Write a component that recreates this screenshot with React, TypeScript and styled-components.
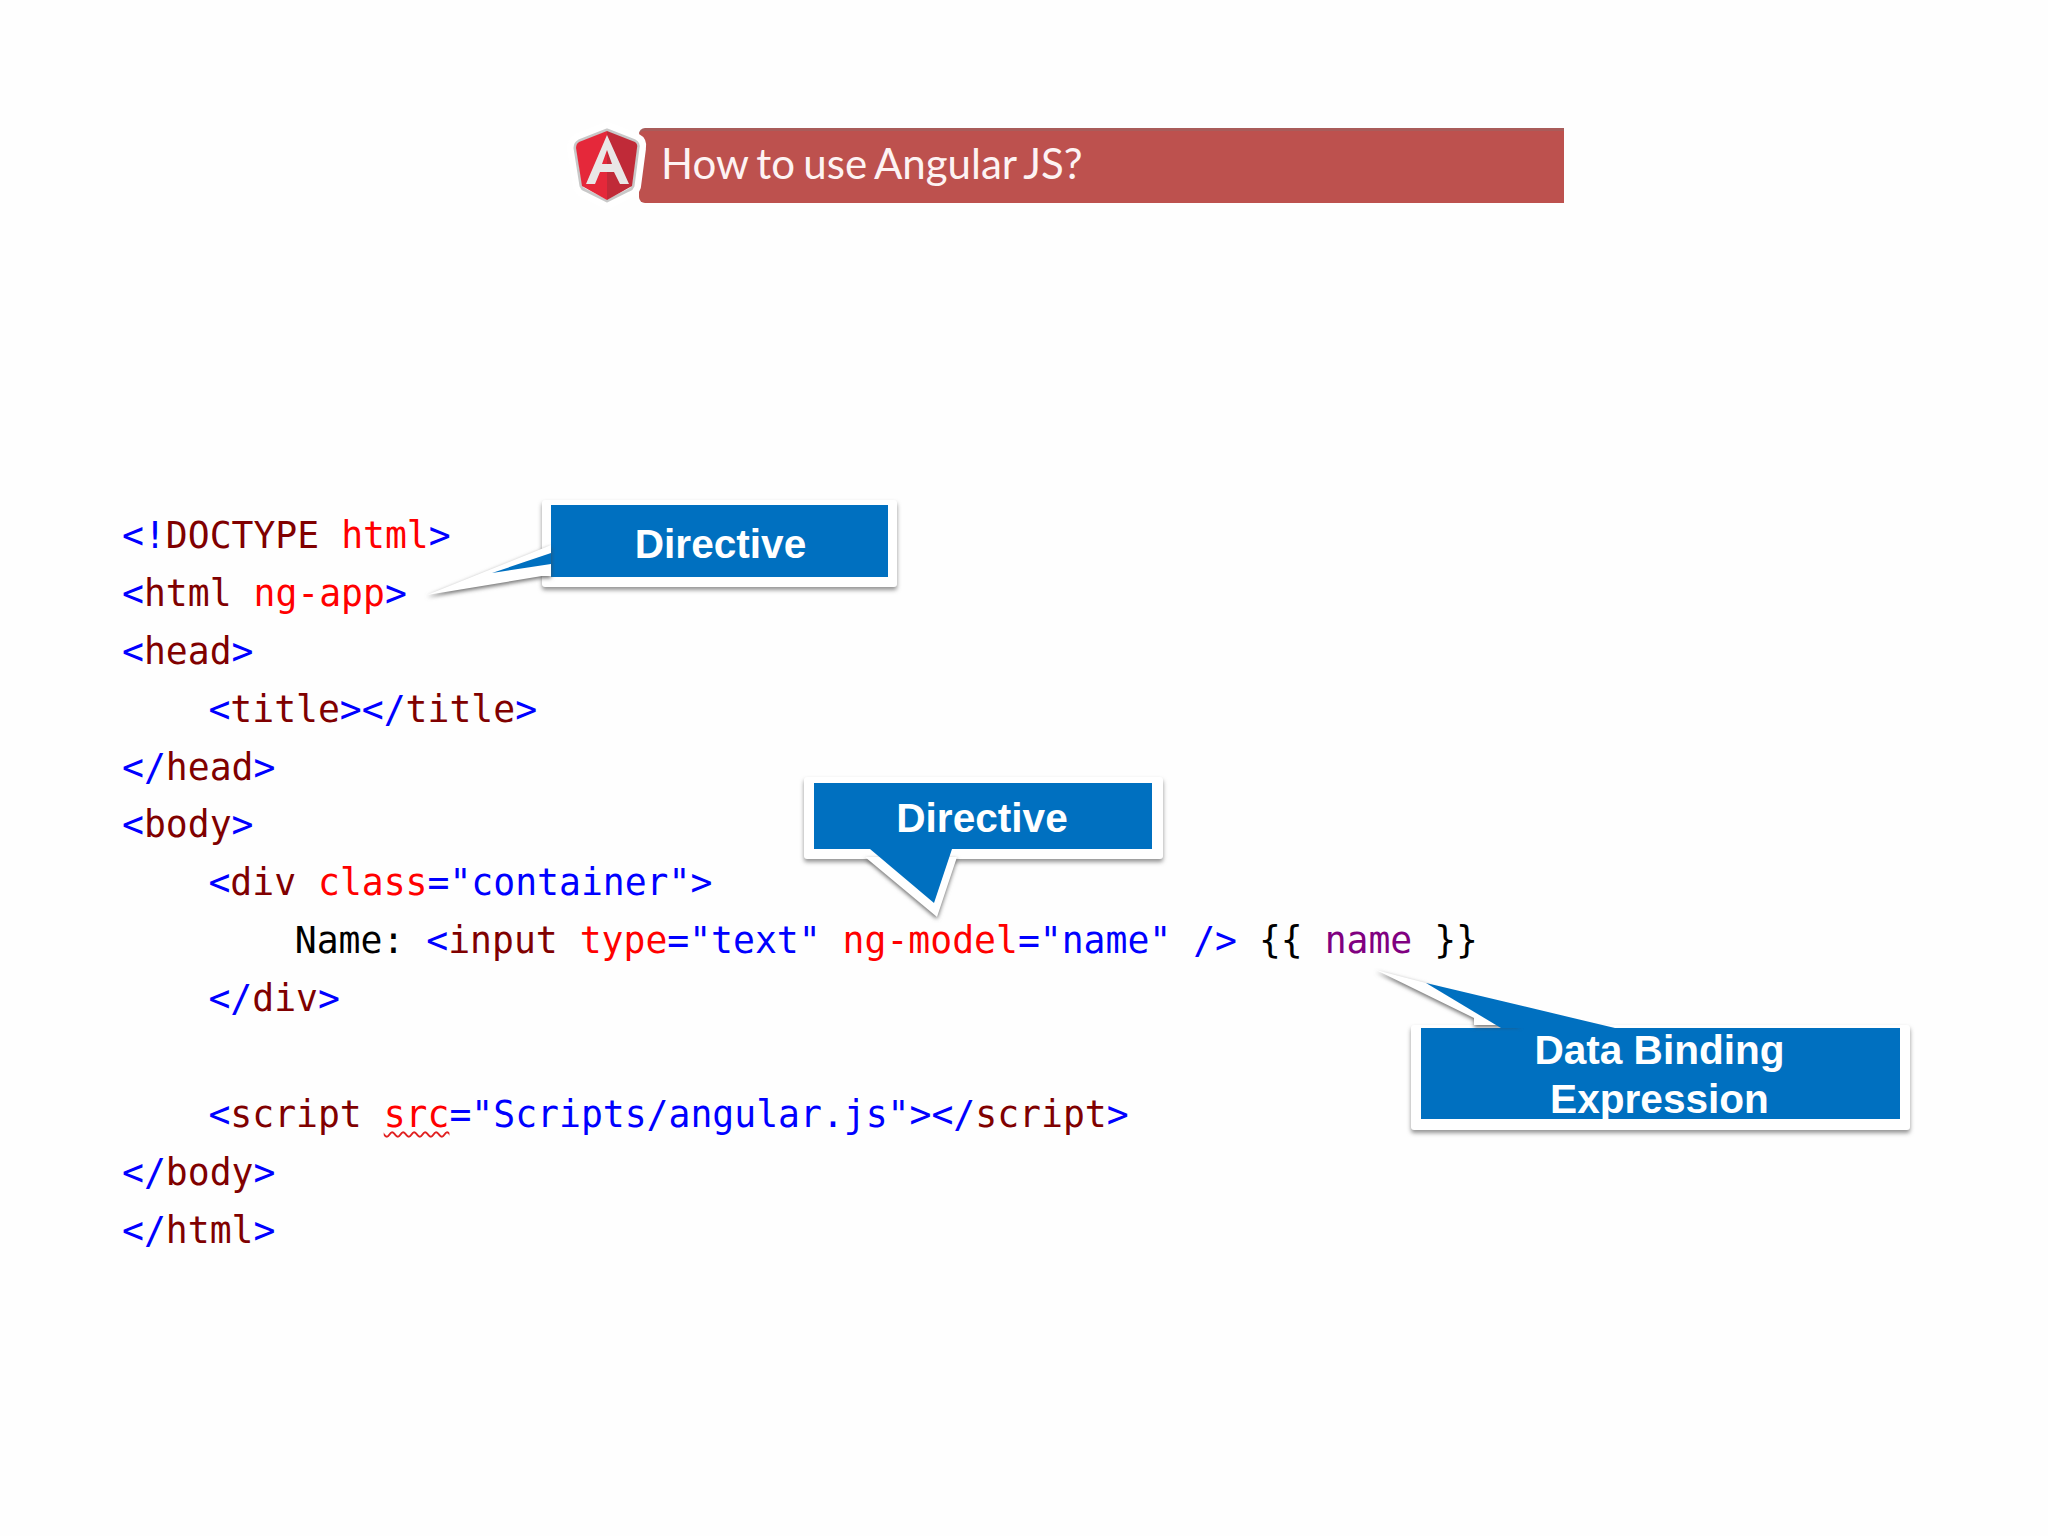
import React from "react";
import styled, { createGlobalStyle } from "styled-components";

const Global = createGlobalStyle`
  html, body { margin: 0; padding: 0; background: #fefefe; }
  #root { width: 2048px; height: 1536px; overflow: hidden; }
`;

const Page = styled.div`
  position: relative;
  width: 2048px;
  height: 1536px;
  padding: 128px 0 0 122px;
  box-sizing: border-box;
  background: #fefefe;
`;

const Header = styled.header`
  display: flex;
  align-items: stretch;
  width: 991px;
  height: 75px;
  margin-left: 451px;
`;

const LogoSlot = styled.div`
  flex: none;
  width: 76px;
  margin-right: -10px;
  position: relative;
  z-index: 1;
  line-height: 0;
`;

const TitleBar = styled.div`
  flex: 1;
  display: flex;
  align-items: center;
  padding: 0 0 9px 22px;
  border-radius: 6px 0 0 6px;
  background: #bd514e;
  border-top: 3px solid #a95c5a;
  box-sizing: border-box;
`;

const Title = styled.h1`
  margin: 0;
  color: #fdf3f3;
  font: 400 42px "Lato", "Liberation Sans", sans-serif;
  word-spacing: -2.5px;
`;

const Code = styled.div`
  margin-top: 304px;
  font: 400 36.4px/57.9px "DejaVu Sans Mono", "Liberation Mono", monospace;
  color: #000;
`;

const Line = styled.div<{ $indent?: number }>`
  height: 57.9px;
  white-space: pre;
  padding-left: ${(p) => (p.$indent ?? 0) * 21.6}px;
`;

const T = styled.span`color: #0000ff;`;
const N = styled.span`color: #800000;`;
const A = styled.span`color: #ff0000;`;
const P = styled.span`color: #800080;`;
const Squiggle = styled.span`
  color: #ff0000;
  text-decoration: underline wavy #e02020 2px;
  text-underline-offset: 4px;
`;

const Callout = styled.div<{ $x: number; $y: number; $w: number; $h: number; $pad: string }>`
  position: absolute;
  left: ${(p) => p.$x}px;
  top: ${(p) => p.$y}px;
  width: ${(p) => p.$w}px;
  height: ${(p) => p.$h}px;
  padding: ${(p) => p.$pad};
  box-sizing: border-box;
  background: #fff;
  border-radius: 3px;
  box-shadow: 0 3px 4px rgba(90, 90, 90, 0.65);
`;

const CalloutFace = styled.div`
  height: 100%;
  display: flex;
  align-items: center;
  justify-content: center;
  text-align: center;
  background: #0070c0;
  color: #fff;
  font: 700 40.6px/49px "Liberation Sans", Arial, sans-serif;
`;

const CalloutLabel = styled.span<{ $dx: number; $dy: number }>`
  transform: translate(${(p) => p.$dx}px, ${(p) => p.$dy}px);
`;

const Tail = styled.svg`
  position: absolute;
  left: 0;
  top: 0;
  overflow: visible;
  pointer-events: none;
`;

const TailEdge = styled.polygon`
  fill: #fff;
  filter: drop-shadow(0 2px 2px rgba(70, 70, 70, 0.8));
`;

const TailFill = styled.polygon`
  fill: #0070c0;
`;

const LogoArt = styled.svg`
  overflow: visible;
`;

const Logo = () => (
  <LogoArt width="76" height="75" viewBox="0 0 76 75">
    <path
      d="M34 2 L62 13 Q66 15 65 20 L60 58 Q59 61 56 62 L34 73 L12 62 Q9 61 8 58 L2 20 Q2 15 6 13 Z"
      fill="#fff"
      stroke="#fff"
      strokeWidth="16"
      strokeLinejoin="round"
    />
    <path
      d="M34 2 L62 13 Q66 15 65 20 L60 58 Q59 61 56 62 L34 73 L12 62 Q9 61 8 58 L2 20 Q2 15 6 13 Z"
      fill="none"
      stroke="#c8c8c8"
      strokeWidth="3"
      strokeLinejoin="round"
    />
    <path d="M34 3 L6 14 Q3 16 3 20 L9 58 L34 72 Z" fill="#e5283a" />
    <path d="M34 3 L62 14 Q65 16 64 20 L59 58 L34 72 Z" fill="#c02a38" />
    <path
      fill="#e9e6e6"
      fillRule="evenodd"
      d="M34 7 L13 56 H22 L27 44 H41 L47 56 H56 Z M29 36 L34 22 L39 36 Z"
    />
  </LogoArt>
);

export default function App() {
  return (
    <Page>
      <Global />
      <Header>
        <LogoSlot>
          <Logo />
        </LogoSlot>
        <TitleBar>
          <Title>How to use Angular JS?</Title>
        </TitleBar>
      </Header>

      <Code>
        <Line><T>&lt;!</T><N>DOCTYPE</N> <A>html</A><T>&gt;</T></Line>
        <Line><T>&lt;</T><N>html</N> <A>ng-app</A><T>&gt;</T></Line>
        <Line><T>&lt;</T><N>head</N><T>&gt;</T></Line>
        <Line $indent={4}><T>&lt;</T><N>title</N><T>&gt;&lt;/</T><N>title</N><T>&gt;</T></Line>
        <Line><T>&lt;/</T><N>head</N><T>&gt;</T></Line>
        <Line><T>&lt;</T><N>body</N><T>&gt;</T></Line>
        <Line $indent={4}><T>&lt;</T><N>div</N> <A>class</A><T>="container"&gt;</T></Line>
        <Line $indent={8}>Name: <T>&lt;</T><N>input</N> <A>type</A><T>="text"</T> <A>ng-model</A><T>="name" /&gt;</T> {"{{"} <P>name</P> {"}}"}</Line>
        <Line $indent={4}><T>&lt;/</T><N>div</N><T>&gt;</T></Line>
        <Line />
        <Line $indent={4}><T>&lt;</T><N>script</N> <Squiggle>src</Squiggle><T>="Scripts/angular.js"&gt;&lt;/</T><N>script</N><T>&gt;</T></Line>
        <Line><T>&lt;/</T><N>body</N><T>&gt;</T></Line>
        <Line><T>&lt;/</T><N>html</N><T>&gt;</T></Line>
      </Code>

      <Callout $x={542} $y={500} $w={355} $h={87} $pad="5px 9px 10px 9px">
        <Tail width="355" height="87">
          <TailEdge points="-115,95 0,76 9,76 9,45" />
          <TailFill points="-50,73 9,53 9,64" />
        </Tail>
        <CalloutFace><CalloutLabel $dx={1} $dy={3}>Directive</CalloutLabel></CalloutFace>
      </Callout>

      <Callout $x={804} $y={777} $w={359} $h={82} $pad="6px 11px 10px 10px">
        <Tail width="359" height="82">
          <TailEdge points="61,80 133,140 153,80" />
          <TailFill points="66,72 130,126 148,72" />
        </Tail>
        <CalloutFace><CalloutLabel $dx={-1} $dy={2}>Directive</CalloutLabel></CalloutFace>
      </Callout>

      <Callout $x={1411} $y={1025} $w={499} $h={105} $pad="3px 10px 11px 10px">
        <Tail width="499" height="105">
          <TailEdge points="-35,-55 63,-7 63,0 110,0 15,-42" />
          <TailFill points="15,-42 204,3 90,3" />
        </Tail>
        <CalloutFace><CalloutLabel $dx={-1} $dy={1}>Data Binding<br />Expression</CalloutLabel></CalloutFace>
      </Callout>
    </Page>
  );
}
